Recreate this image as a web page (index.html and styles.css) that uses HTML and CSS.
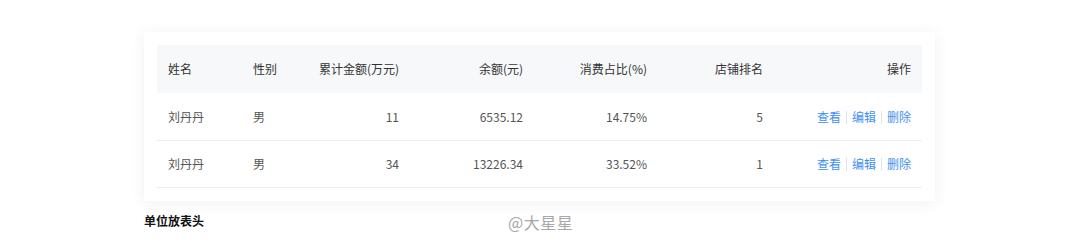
FILE: index.html
```html
<!DOCTYPE html>
<html lang="zh">
<head>
<meta charset="utf-8">
<link rel="stylesheet" href="styles.css">
</head>
<body>
<div class="page">
  <div class="card">
    <table class="tbl">
      <colgroup>
        <col class="c1"><col class="c2"><col class="c3"><col class="c4"><col class="c5"><col class="c6"><col class="c7">
      </colgroup>
      <thead>
        <tr>
          <th class="l">姓名</th>
          <th class="l">性别</th>
          <th class="r">累计金额(万元)</th>
          <th class="r">余额(元)</th>
          <th class="r">消费占比(%)</th>
          <th class="r">店铺排名</th>
          <th class="r">操作</th>
        </tr>
      </thead>
      <tbody>
        <tr>
          <td class="l">刘丹丹</td>
          <td class="l">男</td>
          <td class="r">11</td>
          <td class="r">6535.12</td>
          <td class="r">14.75%</td>
          <td class="r">5</td>
          <td class="r ops"><a>查看</a><span class="sep"></span><a>编辑</a><span class="sep"></span><a>删除</a></td>
        </tr>
        <tr>
          <td class="l">刘丹丹</td>
          <td class="l">男</td>
          <td class="r">34</td>
          <td class="r">13226.34</td>
          <td class="r">33.52%</td>
          <td class="r">1</td>
          <td class="r ops"><a>查看</a><span class="sep"></span><a>编辑</a><span class="sep"></span><a>删除</a></td>
        </tr>
      </tbody>
    </table>
  </div>
  <div class="foot">
    <span class="note">单位放表头</span>
    <span class="mark">@大星星</span>
  </div>
</div>
</body>
</html>
```
FILE: styles.css
```css
html, body {
  margin: 0;
  padding: 0;
  background: #fff;
  font-family: "Noto Sans CJK SC", "Noto Sans", sans-serif;
}
.page {
  position: relative;
  width: 1080px;
  height: 251px;
  padding: 32px 0 0 144px;
  box-sizing: border-box;
}
.card {
  width: 791px;
  box-sizing: border-box;
  padding: 13px;
  background: #fff;
  box-shadow: 0 2px 14px rgba(40, 50, 90, 0.07);
}
.tbl {
  width: 765px;
  border-collapse: collapse;
  table-layout: fixed;
  font-size: 12px;
}
.c1 { width: 85px; }
.c2 { width: 58px; }
.c3 { width: 110px; }
.c4 { width: 124px; }
.c5 { width: 124px; }
.c6 { width: 116px; }
.c7 { width: 148px; }
th, td {
  padding: 0 11px;
  white-space: nowrap;
  box-sizing: border-box;
}
th {
  height: 48px;
  padding-bottom: 2px;
  background: #f7f8fa;
  color: #333;
  font-weight: normal;
}
td {
  height: 47px;
  color: #555;
  border-bottom: 1px solid #ebeef5;
}
.l { text-align: left; }
.r { text-align: right; }
.ops a {
  color: #3f90f0;
}
.sep {
  display: inline-block;
  width: 1px;
  height: 13px;
  background: #dfe3ea;
  margin: 0 5px;
  vertical-align: -2px;
}
.foot {
  margin-top: 6px;
  height: 20px;
}
.note {
  font-size: 12px;
  font-weight: bold;
  color: #111;
}
.mark {
  position: absolute;
  left: 508px;
  top: 210px;
  font-size: 16px;
  color: #a8a8a8;
  letter-spacing: 0.5px;
}
```
